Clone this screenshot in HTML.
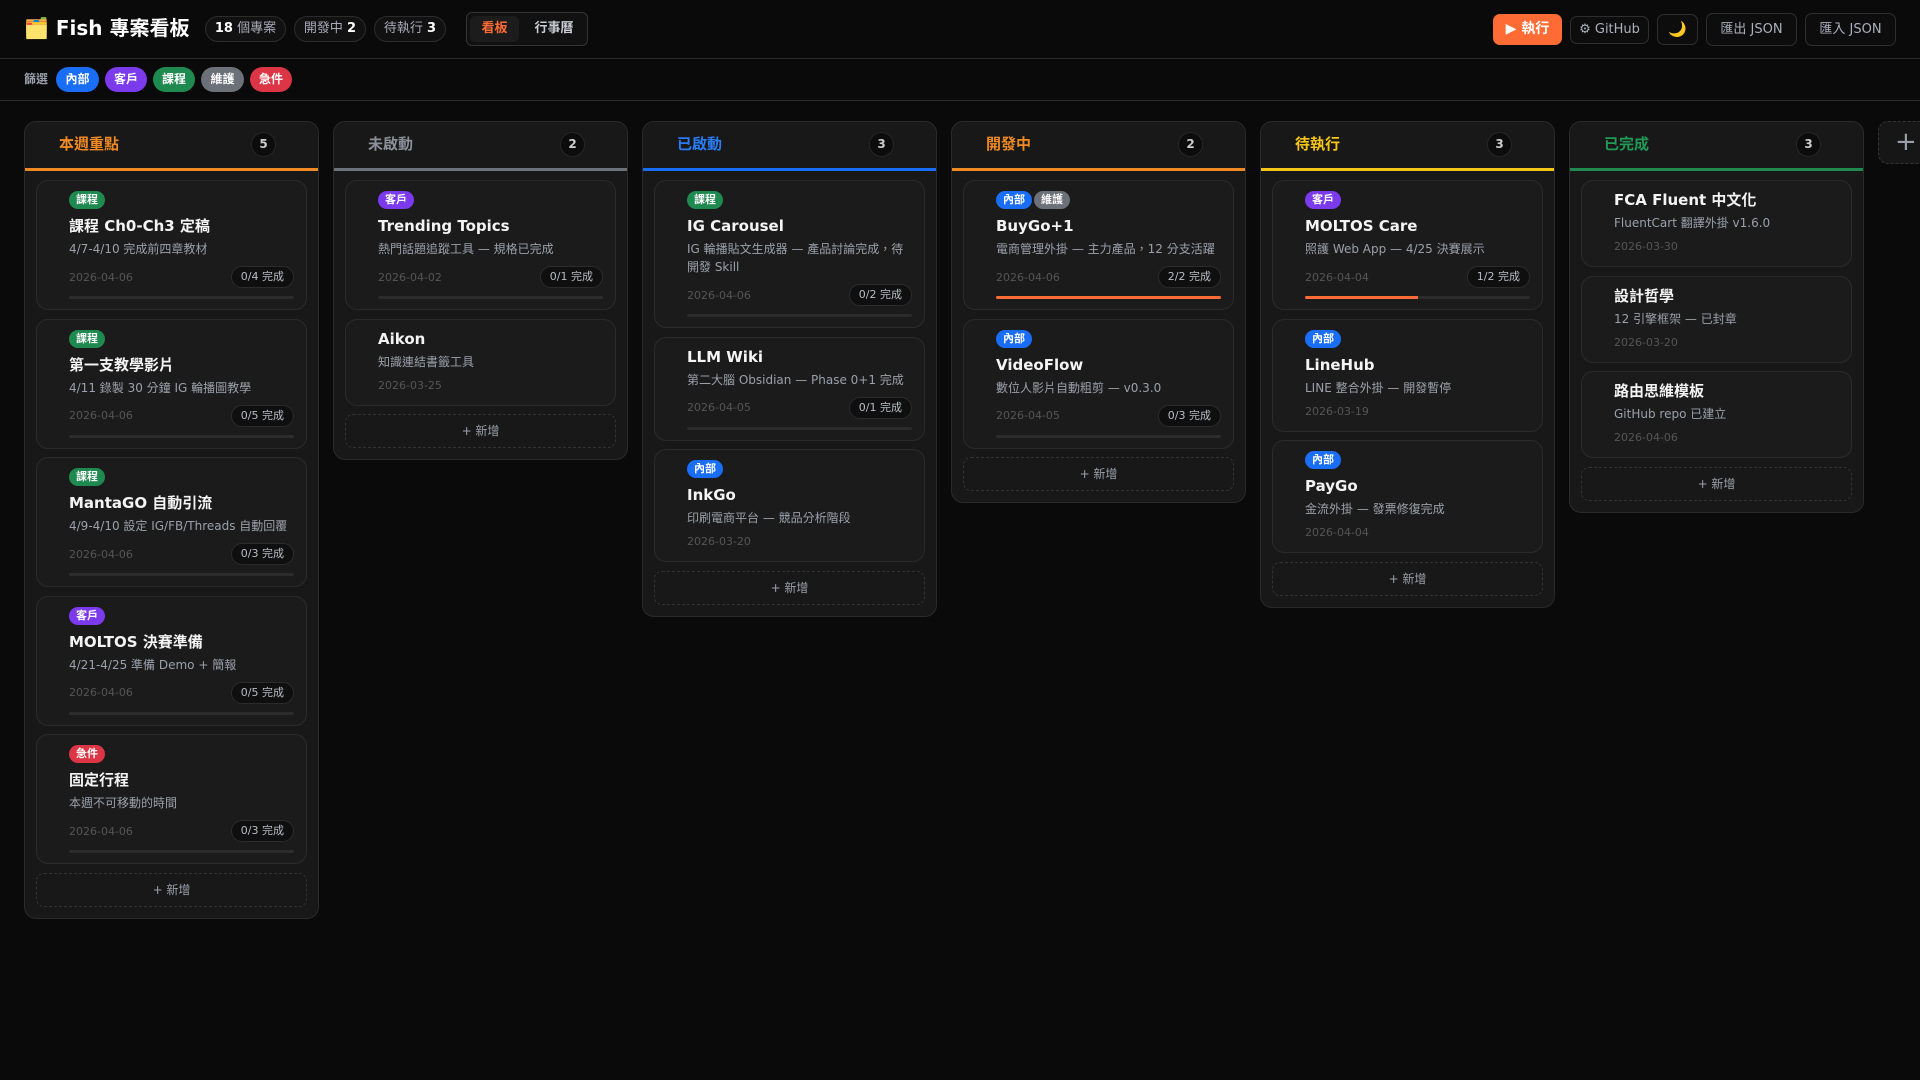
<!DOCTYPE html>
<html><head><meta charset="utf-8"><style>
*{box-sizing:border-box;margin:0;padding:0}
body{width:1920px;height:1080px;background:#0a0a0a;color:#e8e8e8;font-family:"DejaVu Sans","Liberation Sans","Noto Sans CJK TC",sans-serif;overflow:hidden;position:relative}
.top{position:absolute;left:0;top:0;width:1920px;height:59px;border-bottom:1px solid #2b2b2b}
.abs{position:absolute}
.title{left:24px;top:14px;font-size:20px;font-weight:bold;color:#fff;line-height:28px}
.pill{top:16px;height:26px;border:1px solid #2c2c2c;border-radius:13px;background:#111;font-size:13px;color:#aab;line-height:24px;text-align:center}
.pill b{color:#fff}
.btn{top:14px;height:31px;border:1px solid #2e2e2e;border-radius:7px;background:#0d0d0d;color:#aab0bc;font-size:13px;line-height:29px;text-align:center}
.filter{position:absolute;left:0;top:59px;width:1920px;height:42px;border-bottom:1px solid #2b2b2b}
.chip{position:absolute;top:8px;height:25px;border-radius:13px;color:#fff;font-size:12px;font-weight:bold;line-height:25px;text-align:center}
.col{position:absolute;top:121px;width:295px;background:#181818;border:1px solid #2a2a2a;border-radius:12px;padding-bottom:11px}
.ch{height:49px;border-bottom:3px solid;position:relative}
.ch .t{position:absolute;left:34px;top:11px;font-size:15px;font-weight:bold;line-height:22px}
.ch .n{position:absolute;right:42px;top:10px;width:25px;height:25px;border-radius:50%;background:#0c0c0c;border:1px solid #262626;color:#ccc;font-size:12px;font-weight:bold;line-height:23px;text-align:center}
.cards{padding:9px 11px 0}
.card{background:#1b1b1b;border:1px solid #2b2b2b;border-radius:12px;padding:10px 12px 10px 32px;margin-bottom:8.5px}
.card.nt{padding-top:8px}
.tag{display:inline-block;height:18px;padding:0 7px;border-radius:9px;color:#fff;font-size:11px;font-weight:bold;line-height:18px;margin-right:2px;vertical-align:top}
.tg{height:18px;margin-bottom:6px}
.ct{font-size:15px;font-weight:bold;color:#f4f4f4;line-height:22px}
.cd{font-size:12px;color:#9aa0ab;line-height:18px;margin-top:3px}
.row{margin-top:8px;height:22px;display:flex;justify-content:space-between;align-items:center}
.dt{font-size:11px;color:#555;}
.dt2{font-size:11px;color:#555;line-height:18px;margin-top:6px}
.bd{height:22px;padding:0 9px;border-radius:11px;background:#0f0f0f;border:1px solid #2b2b2b;font-size:11px;color:#b8bcc4;line-height:20px}
.bar{margin-top:8px;height:3px;background:#2c2c2c;border-radius:2px;overflow:hidden}
.bar i{display:block;height:3px;background:#ff6b35}
.add{height:34px;border:1px dashed #333;border-radius:8px;text-align:center;font-size:12px;color:#9aa0ab;line-height:32px}
.b{background:#1a6ef5}.p{background:#7c3aed}.g{background:#1f8a4f}.y{background:#6b7079}.r{background:#dc3545}
</style></head><body>
<div class="top">
<div class="abs title">🗂️ Fish 專案看板</div>
<div class="abs pill" style="left:205px;width:81px"><b>18</b> 個專案</div>
<div class="abs pill" style="left:294px;width:72px">開發中 <b>2</b></div>
<div class="abs pill" style="left:374px;width:72px">待執行 <b>3</b></div>
<div class="abs" style="left:466px;top:12px;width:122px;height:34px;border:1px solid #333;border-radius:6px;background:#111"></div>
<div class="abs" style="left:470px;top:16px;width:49px;height:26px;border-radius:5px;background:#1c1c1c;color:#ff6b35;font-size:13px;font-weight:bold;line-height:26px;text-align:center">看板</div>
<div class="abs" style="left:525px;top:16px;width:58px;height:26px;color:#c8ccd4;font-size:13px;font-weight:bold;line-height:26px;text-align:center">行事曆</div>
<div class="abs btn" style="left:1493px;width:69px;background:#ff6b35;border-color:#ff6b35;color:#fff;font-size:14px;font-weight:bold">▶ 執行</div>
<div class="abs btn" style="left:1570px;width:79px;height:28px;top:16px;line-height:26px">⚙ GitHub</div>
<div class="abs btn" style="left:1657px;width:41px;color:#f5c518;font-size:15px">🌙</div>
<div class="abs btn" style="left:1706px;width:91px;height:33px;top:13px;line-height:31px">匯出 JSON</div>
<div class="abs btn" style="left:1805px;width:91px;height:33px;top:13px;line-height:31px">匯入 JSON</div>
</div>
<div class="filter">
<div class="abs" style="left:24px;top:11px;font-size:12px;font-weight:bold;color:#9aa0ab;line-height:18px">篩選</div>
<div class="chip b" style="left:56px;width:43px">內部</div>
<div class="chip p" style="left:105px;width:42px">客戶</div>
<div class="chip g" style="left:153px;width:42px">課程</div>
<div class="chip y" style="left:201px;width:43px">維護</div>
<div class="chip r" style="left:250px;width:42px">急件</div>
</div>

<div class="col" style="left:24px"><div class="ch" style="border-color:#f08a24"><span class="t" style="color:#f08a24">本週重點</span><span class="n">5</span></div><div class="cards">
<div class="card"><div class="tg"><span class="tag g">課程</span></div><div class="ct">課程 Ch0-Ch3 定稿</div><div class="cd">4/7-4/10 完成前四章教材</div><div class="row"><span class="dt">2026-04-06</span><span class="bd">0/4 完成</span></div><div class="bar"></div></div>
<div class="card"><div class="tg"><span class="tag g">課程</span></div><div class="ct">第一支教學影片</div><div class="cd">4/11 錄製 30 分鐘 IG 輪播圖教學</div><div class="row"><span class="dt">2026-04-06</span><span class="bd">0/5 完成</span></div><div class="bar"></div></div>
<div class="card"><div class="tg"><span class="tag g">課程</span></div><div class="ct">MantaGO 自動引流</div><div class="cd">4/9-4/10 設定 IG/FB/Threads 自動回覆</div><div class="row"><span class="dt">2026-04-06</span><span class="bd">0/3 完成</span></div><div class="bar"></div></div>
<div class="card"><div class="tg"><span class="tag p">客戶</span></div><div class="ct">MOLTOS 決賽準備</div><div class="cd">4/21-4/25 準備 Demo + 簡報</div><div class="row"><span class="dt">2026-04-06</span><span class="bd">0/5 完成</span></div><div class="bar"></div></div>
<div class="card"><div class="tg"><span class="tag r">急件</span></div><div class="ct">固定行程</div><div class="cd">本週不可移動的時間</div><div class="row"><span class="dt">2026-04-06</span><span class="bd">0/3 完成</span></div><div class="bar"></div></div>
<div class="add">+ 新增</div></div></div>

<div class="col" style="left:333px"><div class="ch" style="border-color:#6b7079"><span class="t" style="color:#8a8f98">未啟動</span><span class="n">2</span></div><div class="cards">
<div class="card"><div class="tg"><span class="tag p">客戶</span></div><div class="ct">Trending Topics</div><div class="cd">熱門話題追蹤工具 — 規格已完成</div><div class="row"><span class="dt">2026-04-02</span><span class="bd">0/1 完成</span></div><div class="bar"></div></div>
<div class="card nt"><div class="ct">Aikon</div><div class="cd">知識連結書籤工具</div><div class="dt2">2026-03-25</div></div>
<div class="add">+ 新增</div></div></div>

<div class="col" style="left:642px"><div class="ch" style="border-color:#1a6ef5"><span class="t" style="color:#2a7cf7">已啟動</span><span class="n">3</span></div><div class="cards">
<div class="card"><div class="tg"><span class="tag g">課程</span></div><div class="ct">IG Carousel</div><div class="cd">IG 輪播貼文生成器 — 產品討論完成，待開發 Skill</div><div class="row"><span class="dt">2026-04-06</span><span class="bd">0/2 完成</span></div><div class="bar"></div></div>
<div class="card nt"><div class="ct">LLM Wiki</div><div class="cd">第二大腦 Obsidian — Phase 0+1 完成</div><div class="row"><span class="dt">2026-04-05</span><span class="bd">0/1 完成</span></div><div class="bar"></div></div>
<div class="card"><div class="tg"><span class="tag b">內部</span></div><div class="ct">InkGo</div><div class="cd">印刷電商平台 — 競品分析階段</div><div class="dt2">2026-03-20</div></div>
<div class="add">+ 新增</div></div></div>

<div class="col" style="left:951px"><div class="ch" style="border-color:#f08a24"><span class="t" style="color:#f08a24">開發中</span><span class="n">2</span></div><div class="cards">
<div class="card"><div class="tg"><span class="tag b">內部</span><span class="tag y">維護</span></div><div class="ct">BuyGo+1</div><div class="cd">電商管理外掛 — 主力產品，12 分支活躍</div><div class="row"><span class="dt">2026-04-06</span><span class="bd">2/2 完成</span></div><div class="bar"><i style="width:100%"></i></div></div>
<div class="card"><div class="tg"><span class="tag b">內部</span></div><div class="ct">VideoFlow</div><div class="cd">數位人影片自動粗剪 — v0.3.0</div><div class="row"><span class="dt">2026-04-05</span><span class="bd">0/3 完成</span></div><div class="bar"></div></div>
<div class="add">+ 新增</div></div></div>

<div class="col" style="left:1260px"><div class="ch" style="border-color:#f5c518"><span class="t" style="color:#f5c518">待執行</span><span class="n">3</span></div><div class="cards">
<div class="card"><div class="tg"><span class="tag p">客戶</span></div><div class="ct">MOLTOS Care</div><div class="cd">照護 Web App — 4/25 決賽展示</div><div class="row"><span class="dt">2026-04-04</span><span class="bd">1/2 完成</span></div><div class="bar"><i style="width:50%"></i></div></div>
<div class="card"><div class="tg"><span class="tag b">內部</span></div><div class="ct">LineHub</div><div class="cd">LINE 整合外掛 — 開發暫停</div><div class="dt2">2026-03-19</div></div>
<div class="card"><div class="tg"><span class="tag b">內部</span></div><div class="ct">PayGo</div><div class="cd">金流外掛 — 發票修復完成</div><div class="dt2">2026-04-04</div></div>
<div class="add">+ 新增</div></div></div>

<div class="col" style="left:1569px"><div class="ch" style="border-color:#1f8a4f"><span class="t" style="color:#1f9a57">已完成</span><span class="n">3</span></div><div class="cards">
<div class="card nt"><div class="ct">FCA Fluent 中文化</div><div class="cd">FluentCart 翻譯外掛 v1.6.0</div><div class="dt2">2026-03-30</div></div>
<div class="card nt"><div class="ct">設計哲學</div><div class="cd">12 引擎框架 — 已封章</div><div class="dt2">2026-03-20</div></div>
<div class="card nt"><div class="ct">路由思維模板</div><div class="cd">GitHub repo 已建立</div><div class="dt2">2026-04-06</div></div>
<div class="add">+ 新增</div></div></div>

<div class="abs" style="left:1878px;top:121px;width:60px;height:43px;border:1px dashed #333;border-radius:10px;background:#161616;color:#9aa0ab;font-size:26px;line-height:40px;padding-left:16px">+</div>
</body></html>
